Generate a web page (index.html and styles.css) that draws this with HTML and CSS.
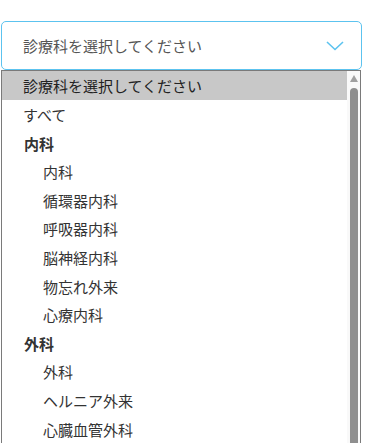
FILE: index.html
```html
<!DOCTYPE html>
<html lang="ja">
<head>
  <meta charset="UTF-8" />
  <title>診療科選択</title>
  <link rel="stylesheet" href="styles.css">
</head>
<body>
  <div class="field">
    <div class="select">
      <span class="select-label">診療科を選択してください</span>
      <svg class="chevron" width="18" height="10" viewBox="0 0 18 10">
        <polyline points="1,1 9,8.5 17,1" fill="none" stroke="#5cc3ef" stroke-width="1.6" />
      </svg>
    </div>
    <div class="listbox">
      <ul class="options">
        <li class="opt selected">診療科を選択してください</li>
        <li class="opt">すべて</li>
        <li class="opt group">内科</li>
        <li class="opt sub">内科</li>
        <li class="opt sub">循環器内科</li>
        <li class="opt sub">呼吸器内科</li>
        <li class="opt sub">脳神経内科</li>
        <li class="opt sub">物忘れ外来</li>
        <li class="opt sub">心療内科</li>
        <li class="opt group">外科</li>
        <li class="opt sub">外科</li>
        <li class="opt sub">ヘルニア外来</li>
        <li class="opt sub">心臓血管外科</li>
      </ul>
      <div class="scrollbar">
        <div class="arrow-up"></div>
        <div class="thumb"></div>
      </div>
    </div>
  </div>
</body>
</html>
```

FILE: styles.css
```css
body { margin: 0; font-family: "Noto Sans CJK JP", "Noto Sans", sans-serif; color: #333; background: #fff; }
.field { padding: 21px 0 0 1px; width: 361px; }
.select { height: 47px; border: 1px solid #5cc3ef; border-radius: 5px; display: flex; align-items: center; justify-content: space-between; padding: 0 17px 0 21px; }
.select-label { font-size: 15px; color: #555; }
.chevron { margin-top: 1px; }
.listbox { width: 358px; height: 380px; border: 1px solid #7a7a7a; border-bottom: none; display: flex; overflow: hidden; }
.options { list-style: none; margin: 0; padding: 0; width: 345px; }
.opt { height: 28.6px; line-height: 30px; font-size: 15px; padding-left: 21px; white-space: nowrap; color: #333; }
.opt.selected { background: #c8c8c8; color: #222; height: 29px; }
.opt.group { font-weight: bold; padding-left: 22px; }
.opt.sub { padding-left: 41px; }
.scrollbar { flex: 1; background: #f9f9f9; display: flex; flex-direction: column; align-items: center; padding-top: 4px; }
.arrow-up { width: 0; height: 0; border-left: 4.5px solid transparent; border-right: 4.5px solid transparent; border-bottom: 7px solid #a0a0a0; }
.thumb { width: 8px; flex: 1; margin: 6px 0 3px; background: #8f8f8f; border-radius: 4px; }
```
